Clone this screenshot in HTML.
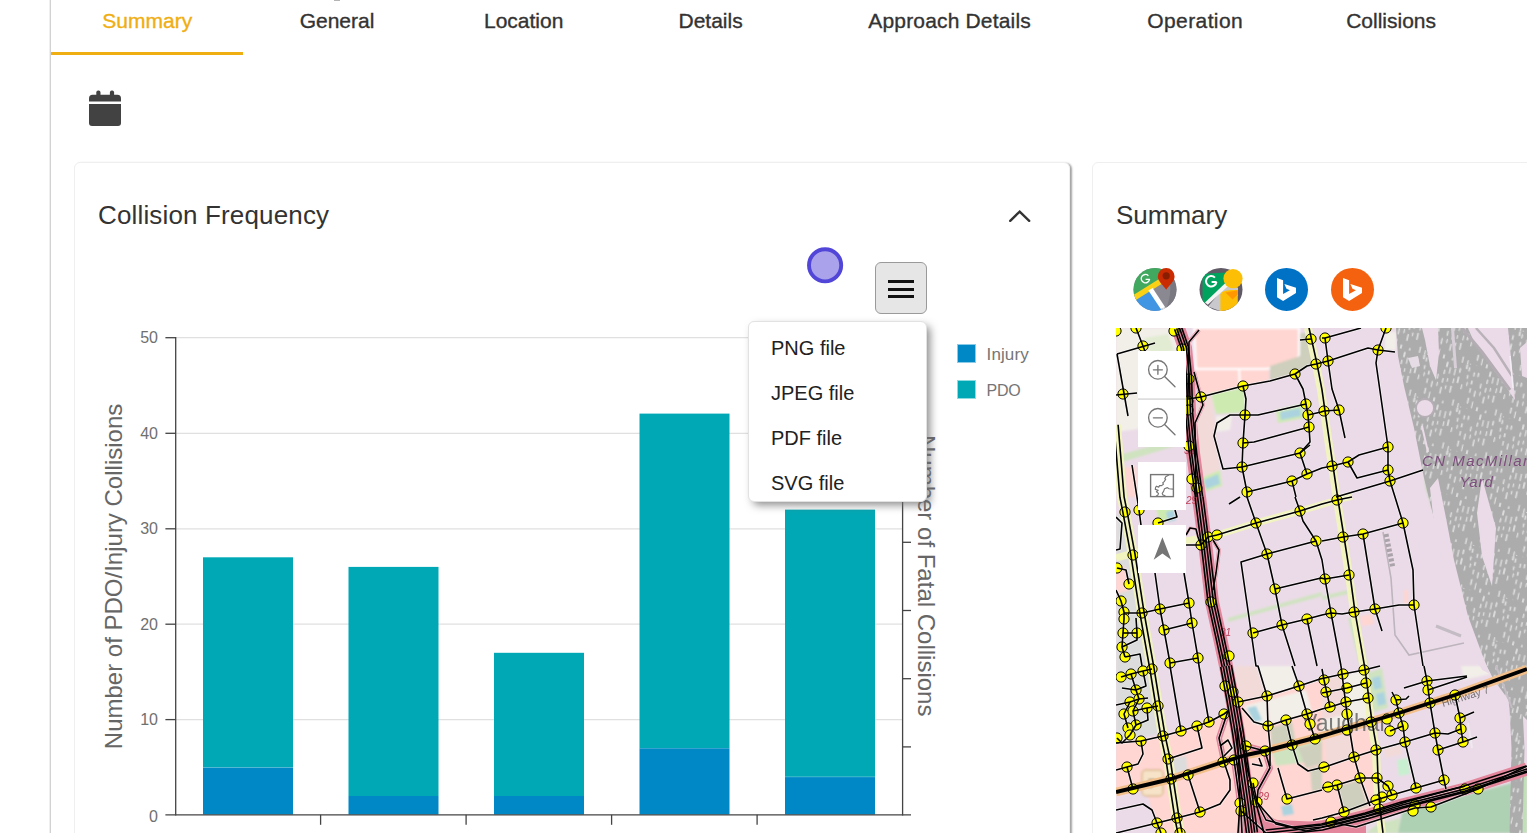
<!DOCTYPE html>
<html>
<head>
<meta charset="utf-8">
<title>Summary</title>
<style>
html,body{margin:0;padding:0;background:#fff;}
body{width:1527px;height:833px;overflow:hidden;position:relative;font-family:"Liberation Sans",sans-serif;color:#333;}
.abs{position:absolute;}
.tab{position:absolute;top:8px;height:26px;line-height:26px;font-size:21px;color:#333;white-space:nowrap;transform:translateX(-50%);-webkit-text-stroke:0.35px #333;}
.tab.active{color:#efae12;-webkit-text-stroke:0.35px #efae12;}
.card{position:absolute;background:#fff;border:1px solid #efefef;border-radius:6px;box-sizing:border-box;}
.title{position:absolute;font-size:26px;line-height:30px;color:#333;white-space:nowrap;}
.mi{position:absolute;left:22px;font-size:20px;line-height:24px;color:#212121;white-space:nowrap;}
</style>
</head>
<body>
<!-- left container border -->
<div class="abs" style="left:49px;top:0;width:1px;height:833px;background:#efefef;"></div><div class="abs" style="left:50px;top:0;width:1px;height:833px;background:#d2d2d2;"></div>
<div class="abs" style="left:334px;top:0;width:6px;height:1px;background:#b4b4b4;"></div>

<!-- tabs -->
<div class="tab active" style="left:147.3px;">Summary</div>
<div class="tab" style="left:337px;">General</div>
<div class="tab" style="left:523.7px;">Location</div>
<div class="tab" style="left:710.6px;">Details</div>
<div class="tab" style="left:949.6px;letter-spacing:0.17px;">Approach Details</div>
<div class="tab" style="left:1195.2px;letter-spacing:0.4px;">Operation</div>
<div class="tab" style="left:1391.1px;">Collisions</div>
<div class="abs" style="left:51px;top:52px;width:192px;height:3px;background:#efae12;"></div>

<!-- calendar icon -->
<svg class="abs" style="left:89px;top:90px;" width="33" height="37" viewBox="0 0 33 37">
  <rect x="7.3" y="0.6" width="4.2" height="7" rx="1.8" fill="#424242"/>
  <rect x="20.9" y="0.6" width="4.2" height="7" rx="1.8" fill="#424242"/>
  <path d="M0 8.4 Q0 4.8 3.6 4.8 H28.4 Q32 4.8 32 8.4 V11.6 H0 Z" fill="#424242"/>
  <path d="M0 14 H32 V33 Q32 36 29 36 H3 Q0 36 0 33 Z" fill="#424242"/>
</svg>

<!-- CARD 1 -->
<div class="card" id="card1" style="left:74px;top:162px;width:996px;height:700px;box-shadow:2px 1px 2px rgba(0,0,0,0.36);"></div>
<div class="title" style="left:98px;top:200px;letter-spacing:0.15px;">Collision Frequency</div>
<svg class="abs" style="left:1005px;top:205px;" width="30" height="24" viewBox="0 0 30 24">
  <path d="M5.2 15.8 L14.7 6.6 L24.2 15.8" fill="none" stroke="#333" stroke-width="2.4" stroke-linecap="round" stroke-linejoin="miter"/>
</svg>

<!-- CHART -->
<svg id="chart" class="abs" style="left:74px;top:230px;" width="996" height="603" viewBox="74 230 996 603" font-family="Liberation Sans, sans-serif">
  <!-- gridlines -->
  <g stroke="#e0e0e0" stroke-width="1.2">
    <line x1="176" y1="337.7" x2="903" y2="337.7"/>
    <line x1="176" y1="433.3" x2="903" y2="433.3"/>
    <line x1="176" y1="528.8" x2="903" y2="528.8"/>
    <line x1="176" y1="624.2" x2="903" y2="624.2"/>
    <line x1="176" y1="719.6" x2="903" y2="719.6"/>
  </g>
  <!-- bars PDO -->
  <g fill="#00a8b5">
    <rect x="203" y="557.3" width="90" height="210.1"/>
    <rect x="348.5" y="566.9" width="90" height="229.1"/>
    <rect x="494" y="652.8" width="90" height="143.2"/>
    <rect x="639.5" y="413.6" width="90" height="334.7"/>
    <rect x="785" y="509.6" width="90" height="267.3"/>
  </g>
  <!-- bars Injury -->
  <g fill="#0087c6">
    <rect x="203" y="767.4" width="90" height="47.2"/>
    <rect x="348.5" y="796" width="90" height="18.6"/>
    <rect x="494" y="796" width="90" height="18.6"/>
    <rect x="639.5" y="748.3" width="90" height="66.3"/>
    <rect x="785" y="776.9" width="90" height="37.7"/>
  </g>
  <!-- separator light lines -->
  <g stroke="#7fd3da" stroke-width="0.6" opacity="0.7">
    <line x1="203" y1="767.4" x2="293" y2="767.4"/>
    <line x1="785" y1="776.9" x2="875" y2="776.9"/>
  </g>
  <!-- axes -->
  <g stroke="#444" stroke-width="1.3" fill="none">
    <line x1="175.7" y1="337" x2="175.7" y2="815.4"/>
    <line x1="165.4" y1="814.8" x2="911" y2="814.8"/>
    <line x1="165.4" y1="337.7" x2="176" y2="337.7"/>
    <line x1="165.4" y1="433.3" x2="176" y2="433.3"/>
    <line x1="165.4" y1="528.8" x2="176" y2="528.8"/>
    <line x1="165.4" y1="624.2" x2="176" y2="624.2"/>
    <line x1="165.4" y1="719.6" x2="176" y2="719.6"/>
    <line x1="320.6" y1="814.8" x2="320.6" y2="824.8"/>
    <line x1="466.1" y1="814.8" x2="466.1" y2="824.8"/>
    <line x1="611.6" y1="814.8" x2="611.6" y2="824.8"/>
    <line x1="757.1" y1="814.8" x2="757.1" y2="824.8"/>
    <line x1="902.6" y1="337" x2="902.6" y2="815.4"/>
    <line x1="902.6" y1="337.7" x2="911" y2="337.7"/>
    <line x1="902.6" y1="405.9" x2="911" y2="405.9"/>
    <line x1="902.6" y1="474.1" x2="911" y2="474.1"/>
    <line x1="902.6" y1="542.3" x2="911" y2="542.3"/>
    <line x1="902.6" y1="610.5" x2="911" y2="610.5"/>
    <line x1="902.6" y1="678.7" x2="911" y2="678.7"/>
    <line x1="902.6" y1="746.9" x2="911" y2="746.9"/>
  </g>
  <!-- y labels -->
  <g font-size="16" fill="#707070" text-anchor="end">
    <text x="158" y="343.3">50</text>
    <text x="158" y="438.9">40</text>
    <text x="158" y="534.4">30</text>
    <text x="158" y="629.8">20</text>
    <text x="158" y="725.2">10</text>
    <text x="158" y="821.6">0</text>
  </g>
  <!-- axis titles -->
  <text transform="translate(122.2,749.2) rotate(-90)" font-size="24" fill="#666" letter-spacing="0">Number of PDO/Injury Collisions</text>
  <text transform="translate(918.3,435) rotate(90)" font-size="24" fill="#666">Number of Fatal Collisions</text>
  <!-- legend -->
  <rect x="957.5" y="344.5" width="18" height="18" fill="#0087c6" stroke="#8ccbe8" stroke-width="1"/>
  <rect x="957.5" y="380.5" width="18" height="18" fill="#00a8b5" stroke="#8cdbe0" stroke-width="1"/>
  <text x="986.6" y="359.8" font-size="17" fill="#757575" letter-spacing="0.1">Injury</text>
  <text x="986.6" y="395.8" font-size="16" fill="#757575" letter-spacing="-0.3">PDO</text>
  <!-- purple circle -->
  <circle cx="825.1" cy="265.3" r="16.1" fill="#aaa2ea" stroke="#5146d8" stroke-width="3.9"/>
</svg>

<!-- hamburger button -->
<div class="abs" style="left:875px;top:262px;width:52px;height:52px;box-sizing:border-box;background:#e6e6e6;border:1px solid #9a9a9a;border-radius:6px;"></div>
<div class="abs" style="left:888px;top:280px;width:26px;height:3px;background:#111;"></div>
<div class="abs" style="left:888px;top:287.6px;width:26px;height:3px;background:#111;"></div>
<div class="abs" style="left:888px;top:295px;width:26px;height:3px;background:#111;"></div>

<!-- dropdown menu -->
<div class="abs" style="left:748px;top:321px;width:179px;height:181px;box-sizing:border-box;background:#fff;border:1px solid #e2e2e2;border-radius:6px;box-shadow:4px 4px 9px -1px rgba(110,110,110,0.8);">
  <div class="mi" style="top:13.5px;">PNG file</div>
  <div class="mi" style="top:58.5px;">JPEG file</div>
  <div class="mi" style="top:103.5px;">PDF file</div>
  <div class="mi" style="top:148.5px;">SVG file</div>
</div>

<!-- CARD 2 -->
<div class="card" id="card2" style="left:1092px;top:162px;width:500px;height:700px;"></div>
<div class="title" style="left:1116px;top:200px;">Summary</div>

<!-- Google Maps icon -->
<svg class="abs" style="left:1131px;top:266px;" width="48" height="48" viewBox="-24 -23.4 48 48">
  <defs><clipPath id="gc1"><circle cx="0" cy="0" r="21.5"/></clipPath></defs>
  <g clip-path="url(#gc1)">
    <rect x="-24" y="-24" width="48" height="48" fill="#8a8992"/>
    <path d="M14 -12 Q18 4 10 22 L24 22 L24 -12 Z" fill="#7a7981"/>
    <polygon points="-24,-24 8,-24 8,-12 -21,7 -24,7" fill="#41a85f"/>
    <polygon points="-24,10 -18,5 -3,-1 7.5,18 5,24 -24,24" fill="#4096e2"/>
    <polygon points="-22,5.8 4.5,-10.6 6.5,-5.4 -19.5,10.8" fill="#fbd116"/>
    <polygon points="-6.6,1.2 -2.4,-1.5 10.2,17.8 5.8,19.6" fill="#ffffff"/>
    <polygon points="5.8,19.6 10.2,17.8 10.8,19 6.6,21" fill="#e8e8e8"/>
  </g>
  <path d="M11.2 -21.4 a8.4 8.4 0 0 1 8.4 8.4 c0 5 -5.4 8.4 -8.4 13.4 c-3 -5 -8.4 -8.4 -8.4 -13.4 a8.4 8.4 0 0 1 8.4 -8.4 z" fill="#cb2b00"/>
  <circle cx="11.2" cy="-13.6" r="3.6" fill="#881d00"/>
  <path d="M-5.4 -10.4 a4.2 4.2 0 1 1 -1.2 -3.3 M-5.2 -10 h-4.2" fill="none" stroke="#fff" stroke-width="1.35"/>
</svg>
<!-- Google Street View icon -->
<svg class="abs" style="left:1197px;top:266px;" width="48" height="48" viewBox="-24 -23.4 48 48">
  <defs><clipPath id="gc2"><circle cx="0" cy="0" r="21.5"/></clipPath></defs>
  <g clip-path="url(#gc2)">
    <rect x="-24" y="-24" width="48" height="48" fill="#5f5a66"/>
    <polygon points="5,-4 17,-2 17,6 0,22 -13,17" fill="#c9c9cd"/>
    <path d="M-16.8 -15 L6 -16.2 V-5 L-15.4 13.4 L-17.8 11.4 V-13.8 Z" fill="#00a35e" stroke="#00a35e" stroke-width="1.4" stroke-linejoin="round"/>
    <polygon points="4.4,-6.4 7.2,-3.4 -13.2,15.4 -16,13" fill="#f4f4f4"/>
    <path d="M-0.6 24 V5 Q1 1 10 0.6 H16.8 V24 Z" fill="#fcbf05"/>
    <polygon points="4.4,3.2 16.8,0.8 16.8,5 11.6,10" fill="#ff9800"/>
  </g>
  <circle cx="12" cy="-10.8" r="9.6" fill="#fcbf05"/>
  <path d="M-4.6 -7.6 a5.2 5.2 0 1 1 -1.5 -4.2 M-4.4 -7.4 h-5" fill="none" stroke="#fff" stroke-width="2"/>
</svg>
<!-- Bing blue -->
<svg class="abs" style="left:1263px;top:266px;" width="48" height="48" viewBox="-24 -23.4 48 48">
  <circle cx="-0.5" cy="0" r="21.5" fill="#0072c6"/>
  <polygon points="-10,-11.3 -3.9,-9.1 -3.9,4.5 2.9,0.85 -0.5,-0.6 -2.6,-5.3 9,-1.7 9,3.7 -3.9,11.7 -10,7.8" fill="#fff"/>
</svg>
<!-- Bing orange -->
<svg class="abs" style="left:1329px;top:266px;" width="48" height="48" viewBox="-24 -23.4 48 48">
  <circle cx="-0.5" cy="0" r="21.5" fill="#f5620f"/>
  <polygon points="-10,-11.3 -3.9,-9.1 -3.9,4.5 2.9,0.85 -0.5,-0.6 -2.6,-5.3 9,-1.7 9,3.7 -3.9,11.7 -10,7.8" fill="#fff"/>
</svg>


<svg class="abs" style="left:1116px;top:328px;" width="411" height="505" viewBox="0 0 411 505" font-family="Liberation Sans, sans-serif">
<defs>
<pattern id="hatch" width="44" height="44" patternUnits="userSpaceOnUse" patternTransform="rotate(13)"><rect width="44" height="44" fill="#acacac"/><rect x="0.7" y="2.6" width="1.7" height="4.5" rx="0.8" fill="#dcdcdc"/><rect x="0.7" y="10.5" width="1.6" height="4.2" rx="0.8" fill="#dcdcdc"/><rect x="1.9" y="17.4" width="1.4" height="4.3" rx="0.8" fill="#dcdcdc"/><rect x="0.8" y="42.9" width="1.4" height="7.0" rx="0.8" fill="#dcdcdc"/><rect x="6.6" y="6.5" width="1.6" height="4.6" rx="0.8" fill="#dcdcdc"/><rect x="5.9" y="15.0" width="1.8" height="4.2" rx="0.8" fill="#dcdcdc"/><rect x="6.3" y="22.8" width="1.5" height="5.1" rx="0.8" fill="#dcdcdc"/><rect x="6.5" y="32.4" width="1.7" height="6.4" rx="0.8" fill="#dcdcdc"/><rect x="7.2" y="43.5" width="1.4" height="6.6" rx="0.8" fill="#dcdcdc"/><rect x="10.7" y="6.1" width="1.8" height="4.5" rx="0.8" fill="#dcdcdc"/><rect x="11.5" y="24.3" width="1.6" height="6.4" rx="0.8" fill="#dcdcdc"/><rect x="11.7" y="35.3" width="1.3" height="7.3" rx="0.8" fill="#dcdcdc"/><rect x="15.6" y="15.9" width="1.6" height="5.4" rx="0.8" fill="#dcdcdc"/><rect x="16.8" y="24.1" width="1.4" height="4.4" rx="0.8" fill="#dcdcdc"/><rect x="17.0" y="39.7" width="1.9" height="5.6" rx="0.8" fill="#dcdcdc"/><rect x="22.0" y="2.2" width="2.0" height="5.5" rx="0.8" fill="#dcdcdc"/><rect x="21.0" y="10.6" width="1.6" height="4.6" rx="0.8" fill="#dcdcdc"/><rect x="21.3" y="19.1" width="1.6" height="4.9" rx="0.8" fill="#dcdcdc"/><rect x="21.4" y="28.0" width="1.7" height="7.3" rx="0.8" fill="#dcdcdc"/><rect x="26.2" y="7.0" width="1.4" height="6.8" rx="0.8" fill="#dcdcdc"/><rect x="25.9" y="17.9" width="1.4" height="4.2" rx="0.8" fill="#dcdcdc"/><rect x="25.8" y="25.4" width="1.4" height="4.2" rx="0.8" fill="#dcdcdc"/><rect x="26.2" y="41.2" width="1.6" height="4.5" rx="0.8" fill="#dcdcdc"/><rect x="31.4" y="6.8" width="1.4" height="7.5" rx="0.8" fill="#dcdcdc"/><rect x="31.9" y="17.0" width="1.4" height="5.2" rx="0.8" fill="#dcdcdc"/><rect x="30.8" y="24.8" width="1.7" height="7.3" rx="0.8" fill="#dcdcdc"/><rect x="35.9" y="5.6" width="1.8" height="4.9" rx="0.8" fill="#dcdcdc"/><rect x="36.0" y="14.3" width="1.9" height="6.7" rx="0.8" fill="#dcdcdc"/><rect x="36.4" y="37.5" width="1.5" height="6.6" rx="0.8" fill="#dcdcdc"/><rect x="41.7" y="0.2" width="2.0" height="5.0" rx="0.8" fill="#dcdcdc"/><rect x="41.0" y="21.0" width="1.4" height="5.3" rx="0.8" fill="#dcdcdc"/><rect x="41.9" y="40.1" width="1.4" height="5.7" rx="0.8" fill="#dcdcdc"/></pattern>
<filter id="bl" x="-5%" y="-5%" width="110%" height="110%"><feGaussianBlur stdDeviation="0.9"/></filter>
<filter id="bl2" x="-5%" y="-5%" width="110%" height="110%"><feGaussianBlur stdDeviation="0.6"/></filter>
<clipPath id="mc"><rect width="411" height="505"/></clipPath>
</defs>
<g clip-path="url(#mc)">
<rect width="411" height="505" fill="#ebdbe8"/>
<g filter="url(#bl)">
<polygon points="0,0 62,0 69,25 71,60 72,92 30,100 0,104" fill="#f2efe9" />
<polygon points="28,10 52,6 58,22 36,30" fill="#e2ecd2" />
<polygon points="0,128 70,108 72,114 0,136" fill="#cfe3c0" />
<polygon points="8,140 20,138 24,169 12,169" fill="#ffd6d1" />
<path d="M78 0 H183 V26 Q182 36 170 37 L150 41 H80 Z" fill="#ffd6d1" stroke="#fff" stroke-width="2"/>
<polygon points="80,42 153,42 153,52 127,58 85,68 82,60" fill="#ffd6d1" />
<path d="M80 41 H150 M123 41 L124 58" stroke="#fff" stroke-width="2" fill="none"/>
<polygon points="154,38 184,28 184,5 194,5 198,34 179,46 154,53" fill="#cfcfbd" />
<polygon points="80,70 96,68 100,100 104,142 84,160 80,130" fill="#f2dad9" />
<polygon points="95,65 128,60 130,84 100,86" fill="#cdebb0" />
<polygon points="100,88 116,88 114,102 100,104" fill="#f2efe9" />
<polygon points="160,82 186,76 188,90 162,95" fill="#cdebb0" />
<polygon points="164,84 184,80 185,88 165,92" fill="#aad3df" />
<polygon points="85,150 104,142 106,158 88,164" fill="#cdebb0" />
<polygon points="88,152 102,146 104,156 90,161" fill="#aad3df" />
<polygon points="0,186 8,186 16,227 26,285 36,338 0,338" fill="#dddcdc" />
<polygon points="0,338 36,338 42,378 46,405 0,415" fill="#dddcdc" />
<polygon points="40,180 56,178 58,190 44,196" fill="#cdebb0" />
<polygon points="50,184 58,182 60,192 52,194" fill="#aad3df" />
<polygon points="0,240 8,238 14,262 0,266" fill="#ffd6d1" />
<polygon points="112,290 206,264 206,268 112,294" fill="#cfe3c0" />
<polygon points="0,415 47,408 93,394 108,386 112,383 125,505 0,505" fill="#ffd6d1" />
<polygon points="0,468 30,462 36,482 45,505 0,505" fill="#ebdbe8" />
<polygon points="56,430 70,428 72,446 58,450" fill="#dddcdc" />
<rect x="26" y="442" width="21" height="26" rx="4" fill="#f6e3c8" stroke="#dcb98c" stroke-width="1.4"/>
<text x="32" y="460" font-size="13" fill="#7a6a52" font-weight="bold">7</text>
<polygon points="118,338 140,338 151,368 122,376" fill="#f2dad9" />
<polygon points="142,338 176,338 183,358 151,368" fill="#f2efe9" />
<polygon points="122,376 206,352 206,505 150,505 135,480 128,430" fill="#ffd6d1" />
<polygon points="128,378 150,372 152,398 138,396" fill="#f2efe9" />
<polygon points="131,380 140,378 146,392 138,394" fill="#aad3df" />
<polygon points="154,400 176,394 180,416 156,420" fill="#cfcfbd" />
<polygon points="152,372 190,362 196,384 154,396" fill="#f2efe9" />
<polygon points="156,424 206,410 206,432 160,438" fill="#cfe3c0" />
<polygon points="182,420 206,414 206,436 190,440" fill="#cfcfbd" />
<polygon points="194,440 206,438 206,462 196,464" fill="#cfcfbd" />
<polygon points="165,478 176,476 178,486 167,488" fill="#aad3df" />
<polygon points="206,352 250,342 256,394 206,408" fill="#f2efe9" />
<polygon points="206,352 226,347 232,386 206,392" fill="#f2dad9" />
<polygon points="206,412 260,398 262,450 264,482 206,498" fill="#ffd6d1" />
<polygon points="222,458 243,452 252,478 228,486" fill="#cfcfbd" />
<polygon points="209,412 232,406 238,430 210,438" fill="#f2dad9" />
<polygon points="252,345 266,340 272,380 258,384" fill="#cfe3c0" />
<polygon points="256,350 264,348 266,360 258,362" fill="#aad3df" />
<polygon points="260,366 268,364 270,376 262,378" fill="#aad3df" />
<polygon points="268,420 284,416 286,426 270,430" fill="#f2dad9" />
<polygon points="281,432 292,430 294,446 283,448" fill="#c8f0d0" />
<polygon points="282,505 286,484 346,468 411,451 411,505" fill="#aed1b3" />
<polygon points="250,505 262,496 284,490 282,505" fill="#cfe3c0" />
<polygon points="398,440 411,438 411,505 400,505" fill="#c0e0b8" />
<polygon points="269,4 280,4 280,22 269,22" fill="#f2efe9" />
<polygon points="307,7 313,7 313,14 307,14" fill="#aad3df" />
<polygon points="308,142 316,142 322,169 328,181 316,180 310,160" fill="#b5d8a4" />
<polygon points="325,189 336,188 342,234 338,220" fill="#aad3df" />
<polygon points="345,338 372,338 374,346 348,352" fill="#f2efe9" />
<polygon points="288,262 292,262 292,276 288,276" fill="#ffd6d1" />
<polygon points="244,288 256,286 258,296 246,298" fill="#ffd6d1" />
<polygon points="206,268 232,262 232,266 206,272" fill="#cfe3c0" />
<polygon points="232,290 240,290 252,338 262,380 256,380 244,338" fill="#cfe3c0" />
</g>
<g filter="url(#bl2)">
<polygon points="280,0 411,0 411,392 397,378 378,352 360,318 344,282 330,238 319,195 308,150 298,100 288,58 282,28" fill="url(#hatch)"/>
<polygon points="306,0 322,0 323,25 320,52 314,38 309,12" fill="#ebdbe8" />
<polygon points="335,0 338,0 341,40 338,40" fill="#d8cfd8" />
<polygon points="352,0 392,0 396,40 399,72 388,56 372,34 358,14" fill="#ebdbe8" />
<path d="M346 0 L366 24 L394 62" stroke="#b3adb3" stroke-width="3" fill="none"/>
<path d="M360 0 L378 20 L396 48" stroke="#b9b2b9" stroke-width="2.5" fill="none"/>
<path d="M394 28 L397 60" stroke="#f3eef3" stroke-width="1.5" fill="none"/>
<polygon points="404,20 411,14 411,50 406,48" fill="#ebdbe8" />
<polygon points="292,30 302,28 304,38 296,40" fill="#e6dce6" />
<polygon points="366,150 380,200 376,258 366,228 361,185" fill="#ebdbe8" />
<polygon points="322,150 330,190 338,232 352,288 366,326 374,346 366,342 354,318 342,292 328,246 318,196 314,160" fill="#ebdbe8" />
<polygon points="296,96 306,140 312,150 322,150 318,120 316,100 308,96" fill="#b1abb1" opacity="0.0"/>
<circle cx="309" cy="80" r="9" fill="#ebdbe8" stroke="#b5aeb5" stroke-width="1.8"/>
<path d="M306 98 L312 124" stroke="#ebdbe8" stroke-width="2" stroke-dasharray="1 0" fill="none"/>
<path d="M393 330 L400 380 L402 420 L400 505" stroke="url(#hatch)" stroke-width="13" fill="none"/>
<path d="M267 204 L275 250 L279 307 L293 327 L348 315" stroke="#bdb5bd" stroke-width="1.6" fill="none"/>
<path d="M270 206 L277 240" stroke="#aaa3aa" stroke-width="5" stroke-dasharray="3 2" fill="none"/>
<path d="M380 338 L396 380" stroke="#c4bcc4" stroke-width="2" fill="none"/>
<path d="M320 298 L345 308" stroke="#c4bcc4" stroke-width="3" fill="none"/>
<path d="M352 395 L356 420" stroke="#f0eaf0" stroke-width="2" fill="none"/>
</g>
<g filter="url(#bl2)" fill="none" stroke-linejoin="round">
<path d="M0 97 L6 169 L9 184 L17 227 L26 285 L36 341 L42 378 L47 408 L52 431 L55 451 L61 490 L64 505" stroke="#f2f4bf" stroke-width="10"/>
<path d="M192 0 L200 36 L205 62 L208 83 L216 138 L221 172 L227 209 L233 247 L238 284 L248 341 L255 394 L260 422 L261 450 L263 481 L266 505" stroke="#f2f4bf" stroke-width="8"/>
<path d="M0 230 L22 224 L70 213 L101 207 L140 195 L184 183 L221 172 L236 168" stroke="#f2f4bf" stroke-width="7"/>
<path d="M0 464 L55 451 L107 434 L130 427 L149 423 L206 408 L283 385 L339 367 L411 341" stroke="#f3c08c" stroke-width="8.5"/>
<path d="M62 0 L69 20 L72 50 L73 85 L77 125 L83 169 L89 215 L96 274 L104 310 L110 338 L116 370 L122 405 L127 440 L132 475 L136 505" stroke="#e3859b" stroke-width="14"/>
<path d="M150 505 L206 499 L250 488 L286 477 L349 461 L411 441" stroke="#e3859b" stroke-width="13"/>
<path d="M112 383 L103 410 L108 434 L118 432 L124 475 L126 505" stroke="#e3859b" stroke-width="6"/>
<path d="M130 418 L149 423 L154 440 L142 462 L141 474 L150 492 L180 500 L206 497" stroke="#e3859b" stroke-width="6"/>
<path d="M78 44 L87 77 L79 95" stroke="#e3859b" stroke-width="4"/>
<path d="M83 2 L73 14" stroke="#e3859b" stroke-width="4"/>
<path d="M70 207 L74 200 L80 201 L82 209" stroke="#e3859b" stroke-width="3"/>
<path d="M97 212 L103 222 L100 245 L97 262" stroke="#e3859b" stroke-width="4"/>
<polygon points="126,505 140,478 160,492 206,494 250,484 250,505" fill="#e3859b" stroke="none"/>
</g>
<g filter="url(#bl2)">
<text x="306" y="138" font-size="15" font-style="italic" fill="#7d4f7d" letter-spacing="1.45">CN MacMillan</text>
<text x="343.5" y="159" font-size="15" font-style="italic" fill="#7d4f7d" letter-spacing="0.9">Yard</text>
<text x="186" y="403" font-size="23" fill="#555" opacity="0.75">Vaughan</text>
<text transform="translate(327,379) rotate(-17)" font-size="10.5" fill="#555" opacity="0.8">Highway 7</text>
<g font-size="10" fill="#c0405a" font-style="italic"><text x="68" y="126">32</text><text x="70" y="176">29</text><text x="104" y="308">31</text><text x="142" y="472">29</text></g>
</g>
<g fill="none" stroke="#ffffff" stroke-width="3.2" opacity="0.55" stroke-linejoin="round" filter="url(#bl2)">
<path d="M1 26 L39 15"/>
<path d="M1 26 L12 88"/>
<path d="M20 0 L27 18 L30 26"/>
<path d="M0 67 L21 65"/>
<path d="M72 71 L85 69 L127 58 L154 53 L179 46 L191 38 L200 36 L212 33 L252 20 L262 22 L279 24"/>
<path d="M127 58 L130 71 L129 87 L127 115 L126 139 L131 164 L131 169 L140 195 L151 226 L159 261 L166 297 L179 338"/>
<path d="M179 46 L187 61 L190 76 L192 87 L193 99 L194 114 L184 125 L191 146"/>
<path d="M129 87 L114 87 L101 95 L98 108 L107 141 L126 139"/>
<path d="M129 87 L142 87 L190 76"/>
<path d="M127 115 L138 114 L193 99"/>
<path d="M126 139 L184 125 L194 117"/>
<path d="M131 164 L176 153 L191 146 L206 140 L216 138 L232 134 L243 127 L272 119"/>
<path d="M176 153 L180 169"/>
<path d="M184 12 L195 11"/>
<path d="M192 87 L205 84 L208 83 L223 82"/>
<path d="M206 10 L209 10 L245 0"/>
<path d="M270 0 L262 22 L260 35 L272 119 L272 142 L274 153 L279 169 L287 195 L297 242 L298 277 L307 338"/>
<path d="M209 10 L212 33 L216 61 L223 82 L229 110"/>
<path d="M232 134 L241 150 L272 142"/>
<path d="M220 169 L274 153 L307 142"/>
<path d="M83 2 L73 14 L72 70"/>
<path d="M78 44 L87 77 L79 95 L80 169"/>
<path d="M16 137 L23 182 L25 197"/>
<path d="M42 195 L61 189 L59 182"/>
<path d="M8 285 L26 285 L44 281 L73 275"/>
<path d="M48 302 L76 295"/>
<path d="M54 335 L82 330"/>
<path d="M39 245 L44 281 L48 302 L54 335 L54 338 L65 403"/>
<path d="M68 245 L73 275 L76 295 L82 330 L83 338 L93 394"/>
<path d="M113 176 L124 169"/>
<path d="M101 207 L140 195 L184 183 L206 176 L221 172 L236 169"/>
<path d="M179 169 L184 183 L187 193 L200 213 L206 232 L209 251 L215 285 L225 338"/>
<path d="M151 226 L200 213"/>
<path d="M151 226 L125 234 L140 338 L142 338 L151 368 L152 398 L154 418 L154 438"/>
<path d="M159 261 L205 250 L209 251 L233 247"/>
<path d="M137 305 L166 297 L191 291 L206 287 L215 285 L226 286 L238 284 L259 281 L283 277 L298 277"/>
<path d="M191 291 L201 338"/>
<path d="M206 213 L227 209 L247 206 L287 195"/>
<path d="M247 206 L259 281 L266 303"/>
<path d="M0 189 L6 195 L4 221 L0 222"/>
<path d="M1 240 L10 242 L13 256"/>
<path d="M0 262 L5 273 L8 284 L8 291 L7 305 L6 319 L9 329"/>
<path d="M7 305 L21 305"/>
<path d="M20 290 L21 305 L21 312 L6 319"/>
<path d="M9 329 L24 326 L26 338"/>
<path d="M5 349 L15 346 L27 343 L36 341"/>
<path d="M15 346 L20 362 L23 371 L17 383 L20 397 L14 407"/>
<path d="M6 360 L20 362 L30 358 L27 343"/>
<path d="M0 377 L14 374 L23 371 L32 370"/>
<path d="M14 374 L8 386 L12 400"/>
<path d="M17 383 L31 380 L42 378"/>
<path d="M31 380 L32 392 L20 397"/>
<path d="M1 410 L6 415 L14 407"/>
<path d="M0 415 L25 413 L47 408 L65 403 L81 398 L93 394 L108 386 L112 383"/>
<path d="M81 398 L86 420 L52 431"/>
<path d="M25 413 L27 426 L22 436 L11 439 L0 442"/>
<path d="M11 439 L17 461"/>
<path d="M72 447 L84 484"/>
<path d="M41 495 L61 490 L84 484 L104 476 L114 462 L114 452 L108 434"/>
<path d="M0 482 L27 476 L36 482 L41 495 L45 505"/>
<path d="M0 505 L41 495"/>
<path d="M122 374 L151 368 L183 358 L204 351 L227 346 L248 342 L264 338"/>
<path d="M176 338 L183 358 L191 386 L194 396 L199 411"/>
<path d="M126 380 L138 394 L152 398 L170 392 L191 386 L206 381 L214 379 L230 374 L252 370"/>
<path d="M170 392 L176 417 L182 436 L192 443 L204 440 L206 440 L238 429 L260 422 L289 414 L319 405 L332 406 L345 401"/>
<path d="M162 440 L171 471 L206 462"/>
<path d="M197 492 L206 490 L228 484 L260 472 L276 467 L300 460 L328 452"/>
<path d="M225 338 L231 386 L238 429 L244 450 L254 478"/>
<path d="M206 365 L231 360 L250 355"/>
<path d="M206 341 L208 352 L214 379"/>
<path d="M276 364 L280 372 L283 385 L287 398 L289 414 L300 460"/>
<path d="M280 372 L290 371 L293 368"/>
<path d="M288 360 L311 353 L351 348"/>
<path d="M312 362 L351 349"/>
<path d="M308 338 L311 353 L314 375 L319 405 L322 422 L328 452 L330 461"/>
<path d="M339 367 L344 390 L345 401 L347 414"/>
<path d="M344 390 L358 384"/>
<path d="M322 422 L347 414 L361 409"/>
<path d="M206 460 L212 459 L221 457 L244 450 L261 450 L272 458 L276 467"/>
<path d="M221 457 L228 484"/>
<path d="M274 403 L287 398"/>
<path d="M112 383 L103 410 L108 434 L118 432"/>
<path d="M104 418 L112 412 L116 420 L108 428"/>
<path d="M130 418 L149 423 L154 440 L142 462 L141 474 L146 480"/>
<path d="M136 436 L146 438 L143 430"/>
<path d="M118 432 L124 475 L125 483 L126 505"/>
<path d="M137 455 L141 474 L150 492 L180 500 L206 497 L250 486 L297 472 L349 458"/>
<path d="M125 483 L150 505"/>
<path d="M146 480 L160 496 L190 503 L230 494 L286 479 L349 463 L411 443"/>
<path d="M215 494 L240 499 L299 480 L315 479 L362 461 L411 438"/>
<path d="M70 207 L74 200 L80 201 L82 209 L85 217"/>
<path d="M70 217 L85 217 L92 209 L101 207"/>
<path d="M97 212 L103 222 L100 245 L97 262"/>
</g>
<g fill="#ffff00" stroke="#000" stroke-width="1">
<circle cx="0" cy="3" r="5.1"/>
<circle cx="20" cy="0" r="5.1"/>
<circle cx="27" cy="18" r="5.1"/>
<circle cx="7" cy="66" r="5.1"/>
<circle cx="58" cy="3" r="5.1"/>
<circle cx="66" cy="21" r="5.1"/>
<circle cx="73" cy="51" r="5.1"/>
<circle cx="72" cy="73" r="5.1"/>
<circle cx="72" cy="82" r="5.1"/>
<circle cx="73" cy="118" r="5.1"/>
<circle cx="76" cy="151" r="5.1"/>
<circle cx="81" cy="160" r="5.1"/>
<circle cx="85" cy="69" r="5.1"/>
<circle cx="127" cy="58" r="5.1"/>
<circle cx="179" cy="46" r="5.1"/>
<circle cx="200" cy="36" r="5.1"/>
<circle cx="129" cy="87" r="5.1"/>
<circle cx="127" cy="115" r="5.1"/>
<circle cx="126" cy="139" r="5.1"/>
<circle cx="131" cy="164" r="5.1"/>
<circle cx="190" cy="76" r="5.1"/>
<circle cx="192" cy="87" r="5.1"/>
<circle cx="193" cy="99" r="5.1"/>
<circle cx="184" cy="125" r="5.1"/>
<circle cx="191" cy="146" r="5.1"/>
<circle cx="176" cy="153" r="5.1"/>
<circle cx="195" cy="11" r="5.1"/>
<circle cx="209" cy="10" r="5.1"/>
<circle cx="212" cy="33" r="5.1"/>
<circle cx="262" cy="22" r="5.1"/>
<circle cx="270" cy="0" r="5.1"/>
<circle cx="223" cy="82" r="5.1"/>
<circle cx="208" cy="83" r="5.1"/>
<circle cx="272" cy="119" r="5.1"/>
<circle cx="232" cy="134" r="5.1"/>
<circle cx="216" cy="138" r="5.1"/>
<circle cx="272" cy="142" r="5.1"/>
<circle cx="274" cy="153" r="5.1"/>
<circle cx="9" cy="184" r="5.1"/>
<circle cx="23" cy="182" r="5.1"/>
<circle cx="42" cy="195" r="5.1"/>
<circle cx="17" cy="227" r="5.1"/>
<circle cx="1" cy="240" r="5.1"/>
<circle cx="13" cy="256" r="5.1"/>
<circle cx="5" cy="273" r="5.1"/>
<circle cx="8" cy="284" r="5.1"/>
<circle cx="26" cy="285" r="5.1"/>
<circle cx="44" cy="281" r="5.1"/>
<circle cx="73" cy="275" r="5.1"/>
<circle cx="8" cy="291" r="5.1"/>
<circle cx="7" cy="305" r="5.1"/>
<circle cx="21" cy="305" r="5.1"/>
<circle cx="48" cy="302" r="5.1"/>
<circle cx="76" cy="295" r="5.1"/>
<circle cx="6" cy="319" r="5.1"/>
<circle cx="9" cy="329" r="5.1"/>
<circle cx="54" cy="335" r="5.1"/>
<circle cx="82" cy="330" r="5.1"/>
<circle cx="95" cy="274" r="5.1"/>
<circle cx="113" cy="328" r="5.1"/>
<circle cx="85" cy="217" r="5.1"/>
<circle cx="92" cy="209" r="5.1"/>
<circle cx="101" cy="207" r="5.1"/>
<circle cx="140" cy="195" r="5.1"/>
<circle cx="184" cy="183" r="5.1"/>
<circle cx="200" cy="213" r="5.1"/>
<circle cx="151" cy="226" r="5.1"/>
<circle cx="159" cy="261" r="5.1"/>
<circle cx="137" cy="305" r="5.1"/>
<circle cx="166" cy="297" r="5.1"/>
<circle cx="191" cy="291" r="5.1"/>
<circle cx="221" cy="172" r="5.1"/>
<circle cx="227" cy="209" r="5.1"/>
<circle cx="247" cy="206" r="5.1"/>
<circle cx="287" cy="195" r="5.1"/>
<circle cx="233" cy="247" r="5.1"/>
<circle cx="209" cy="251" r="5.1"/>
<circle cx="215" cy="285" r="5.1"/>
<circle cx="238" cy="284" r="5.1"/>
<circle cx="259" cy="281" r="5.1"/>
<circle cx="298" cy="277" r="5.1"/>
<circle cx="5" cy="349" r="5.1"/>
<circle cx="15" cy="346" r="5.1"/>
<circle cx="27" cy="343" r="5.1"/>
<circle cx="36" cy="341" r="5.1"/>
<circle cx="20" cy="362" r="5.1"/>
<circle cx="14" cy="374" r="5.1"/>
<circle cx="23" cy="371" r="5.1"/>
<circle cx="31" cy="380" r="5.1"/>
<circle cx="42" cy="378" r="5.1"/>
<circle cx="8" cy="386" r="5.1"/>
<circle cx="17" cy="383" r="5.1"/>
<circle cx="20" cy="397" r="5.1"/>
<circle cx="12" cy="400" r="5.1"/>
<circle cx="14" cy="407" r="5.1"/>
<circle cx="1" cy="410" r="5.1"/>
<circle cx="25" cy="413" r="5.1"/>
<circle cx="47" cy="408" r="5.1"/>
<circle cx="65" cy="403" r="5.1"/>
<circle cx="81" cy="398" r="5.1"/>
<circle cx="93" cy="394" r="5.1"/>
<circle cx="108" cy="386" r="5.1"/>
<circle cx="109" cy="358" r="5.1"/>
<circle cx="117" cy="364" r="5.1"/>
<circle cx="122" cy="374" r="5.1"/>
<circle cx="52" cy="431" r="5.1"/>
<circle cx="11" cy="439" r="5.1"/>
<circle cx="55" cy="451" r="5.1"/>
<circle cx="72" cy="447" r="5.1"/>
<circle cx="17" cy="461" r="5.1"/>
<circle cx="107" cy="434" r="5.1"/>
<circle cx="118" cy="432" r="5.1"/>
<circle cx="130" cy="418" r="5.1"/>
<circle cx="149" cy="423" r="5.1"/>
<circle cx="151" cy="368" r="5.1"/>
<circle cx="183" cy="358" r="5.1"/>
<circle cx="152" cy="398" r="5.1"/>
<circle cx="170" cy="392" r="5.1"/>
<circle cx="191" cy="386" r="5.1"/>
<circle cx="194" cy="396" r="5.1"/>
<circle cx="176" cy="417" r="5.1"/>
<circle cx="199" cy="411" r="5.1"/>
<circle cx="137" cy="455" r="5.1"/>
<circle cx="124" cy="475" r="5.1"/>
<circle cx="141" cy="474" r="5.1"/>
<circle cx="125" cy="483" r="5.1"/>
<circle cx="171" cy="471" r="5.1"/>
<circle cx="84" cy="484" r="5.1"/>
<circle cx="61" cy="490" r="5.1"/>
<circle cx="41" cy="495" r="5.1"/>
<circle cx="64" cy="505" r="5.1"/>
<circle cx="45" cy="505" r="5.1"/>
<circle cx="208" cy="352" r="5.1"/>
<circle cx="227" cy="346" r="5.1"/>
<circle cx="248" cy="342" r="5.1"/>
<circle cx="210" cy="364" r="5.1"/>
<circle cx="231" cy="360" r="5.1"/>
<circle cx="250" cy="355" r="5.1"/>
<circle cx="214" cy="379" r="5.1"/>
<circle cx="230" cy="374" r="5.1"/>
<circle cx="252" cy="370" r="5.1"/>
<circle cx="231" cy="386" r="5.1"/>
<circle cx="255" cy="394" r="5.1"/>
<circle cx="231" cy="402" r="5.1"/>
<circle cx="271" cy="391" r="5.1"/>
<circle cx="283" cy="385" r="5.1"/>
<circle cx="280" cy="372" r="5.1"/>
<circle cx="274" cy="403" r="5.1"/>
<circle cx="287" cy="398" r="5.1"/>
<circle cx="311" cy="353" r="5.1"/>
<circle cx="312" cy="362" r="5.1"/>
<circle cx="314" cy="375" r="5.1"/>
<circle cx="339" cy="367" r="5.1"/>
<circle cx="344" cy="390" r="5.1"/>
<circle cx="345" cy="401" r="5.1"/>
<circle cx="319" cy="405" r="5.1"/>
<circle cx="347" cy="414" r="5.1"/>
<circle cx="322" cy="422" r="5.1"/>
<circle cx="289" cy="414" r="5.1"/>
<circle cx="260" cy="422" r="5.1"/>
<circle cx="238" cy="429" r="5.1"/>
<circle cx="208" cy="439" r="5.1"/>
<circle cx="244" cy="450" r="5.1"/>
<circle cx="261" cy="450" r="5.1"/>
<circle cx="221" cy="457" r="5.1"/>
<circle cx="212" cy="459" r="5.1"/>
<circle cx="272" cy="458" r="5.1"/>
<circle cx="276" cy="467" r="5.1"/>
<circle cx="266" cy="469" r="5.1"/>
<circle cx="260" cy="472" r="5.1"/>
<circle cx="263" cy="481" r="5.1"/>
<circle cx="228" cy="484" r="5.1"/>
<circle cx="215" cy="494" r="5.1"/>
<circle cx="300" cy="460" r="5.1"/>
<circle cx="328" cy="452" r="5.1"/>
<circle cx="349" cy="461" r="5.1"/>
<circle cx="362" cy="461" r="5.1"/>
<circle cx="299" cy="477" r="5.1"/>
<circle cx="297" cy="483" r="5.1"/>
<circle cx="315" cy="479" r="5.1"/>
</g>
<g fill="none" stroke="#000" stroke-width="1.6" stroke-linejoin="round">
<path d="M1 26 L39 15"/>
<path d="M1 26 L12 88"/>
<path d="M20 0 L27 18 L30 26"/>
<path d="M0 67 L21 65"/>
<path d="M72 71 L85 69 L127 58 L154 53 L179 46 L191 38 L200 36 L212 33 L252 20 L262 22 L279 24"/>
<path d="M127 58 L130 71 L129 87 L127 115 L126 139 L131 164 L131 169 L140 195 L151 226 L159 261 L166 297 L179 338"/>
<path d="M179 46 L187 61 L190 76 L192 87 L193 99 L194 114 L184 125 L191 146"/>
<path d="M129 87 L114 87 L101 95 L98 108 L107 141 L126 139"/>
<path d="M129 87 L142 87 L190 76"/>
<path d="M127 115 L138 114 L193 99"/>
<path d="M126 139 L184 125 L194 117"/>
<path d="M131 164 L176 153 L191 146 L206 140 L216 138 L232 134 L243 127 L272 119"/>
<path d="M176 153 L180 169"/>
<path d="M184 12 L195 11"/>
<path d="M192 87 L205 84 L208 83 L223 82"/>
<path d="M206 10 L209 10 L245 0"/>
<path d="M270 0 L262 22 L260 35 L272 119 L272 142 L274 153 L279 169 L287 195 L297 242 L298 277 L307 338"/>
<path d="M209 10 L212 33 L216 61 L223 82 L229 110"/>
<path d="M232 134 L241 150 L272 142"/>
<path d="M220 169 L274 153 L307 142"/>
<path d="M83 2 L73 14 L72 70"/>
<path d="M78 44 L87 77 L79 95 L80 169"/>
<path d="M16 137 L23 182 L25 197"/>
<path d="M42 195 L61 189 L59 182"/>
<path d="M8 285 L26 285 L44 281 L73 275"/>
<path d="M48 302 L76 295"/>
<path d="M54 335 L82 330"/>
<path d="M39 245 L44 281 L48 302 L54 335 L54 338 L65 403"/>
<path d="M68 245 L73 275 L76 295 L82 330 L83 338 L93 394"/>
<path d="M113 176 L124 169"/>
<path d="M101 207 L140 195 L184 183 L206 176 L221 172 L236 169"/>
<path d="M179 169 L184 183 L187 193 L200 213 L206 232 L209 251 L215 285 L225 338"/>
<path d="M151 226 L200 213"/>
<path d="M151 226 L125 234 L140 338 L142 338 L151 368 L152 398 L154 418 L154 438"/>
<path d="M159 261 L205 250 L209 251 L233 247"/>
<path d="M137 305 L166 297 L191 291 L206 287 L215 285 L226 286 L238 284 L259 281 L283 277 L298 277"/>
<path d="M191 291 L201 338"/>
<path d="M206 213 L227 209 L247 206 L287 195"/>
<path d="M247 206 L259 281 L266 303"/>
<path d="M0 189 L6 195 L4 221 L0 222"/>
<path d="M1 240 L10 242 L13 256"/>
<path d="M0 262 L5 273 L8 284 L8 291 L7 305 L6 319 L9 329"/>
<path d="M7 305 L21 305"/>
<path d="M20 290 L21 305 L21 312 L6 319"/>
<path d="M9 329 L24 326 L26 338"/>
<path d="M5 349 L15 346 L27 343 L36 341"/>
<path d="M15 346 L20 362 L23 371 L17 383 L20 397 L14 407"/>
<path d="M6 360 L20 362 L30 358 L27 343"/>
<path d="M0 377 L14 374 L23 371 L32 370"/>
<path d="M14 374 L8 386 L12 400"/>
<path d="M17 383 L31 380 L42 378"/>
<path d="M31 380 L32 392 L20 397"/>
<path d="M1 410 L6 415 L14 407"/>
<path d="M0 415 L25 413 L47 408 L65 403 L81 398 L93 394 L108 386 L112 383"/>
<path d="M81 398 L86 420 L52 431"/>
<path d="M25 413 L27 426 L22 436 L11 439 L0 442"/>
<path d="M11 439 L17 461"/>
<path d="M72 447 L84 484"/>
<path d="M41 495 L61 490 L84 484 L104 476 L114 462 L114 452 L108 434"/>
<path d="M0 482 L27 476 L36 482 L41 495 L45 505"/>
<path d="M0 505 L41 495"/>
<path d="M122 374 L151 368 L183 358 L204 351 L227 346 L248 342 L264 338"/>
<path d="M176 338 L183 358 L191 386 L194 396 L199 411"/>
<path d="M126 380 L138 394 L152 398 L170 392 L191 386 L206 381 L214 379 L230 374 L252 370"/>
<path d="M170 392 L176 417 L182 436 L192 443 L204 440 L206 440 L238 429 L260 422 L289 414 L319 405 L332 406 L345 401"/>
<path d="M162 440 L171 471 L206 462"/>
<path d="M197 492 L206 490 L228 484 L260 472 L276 467 L300 460 L328 452"/>
<path d="M225 338 L231 386 L238 429 L244 450 L254 478"/>
<path d="M206 365 L231 360 L250 355"/>
<path d="M206 341 L208 352 L214 379"/>
<path d="M276 364 L280 372 L283 385 L287 398 L289 414 L300 460"/>
<path d="M280 372 L290 371 L293 368"/>
<path d="M288 360 L311 353 L351 348"/>
<path d="M312 362 L351 349"/>
<path d="M308 338 L311 353 L314 375 L319 405 L322 422 L328 452 L330 461"/>
<path d="M339 367 L344 390 L345 401 L347 414"/>
<path d="M344 390 L358 384"/>
<path d="M322 422 L347 414 L361 409"/>
<path d="M206 460 L212 459 L221 457 L244 450 L261 450 L272 458 L276 467"/>
<path d="M221 457 L228 484"/>
<path d="M274 403 L287 398"/>
<path d="M112 383 L103 410 L108 434 L118 432"/>
<path d="M104 418 L112 412 L116 420 L108 428"/>
<path d="M130 418 L149 423 L154 440 L142 462 L141 474 L146 480"/>
<path d="M136 436 L146 438 L143 430"/>
<path d="M118 432 L124 475 L125 483 L126 505"/>
<path d="M137 455 L141 474 L150 492 L180 500 L206 497 L250 486 L297 472 L349 458"/>
<path d="M125 483 L150 505"/>
<path d="M146 480 L160 496 L190 503 L230 494 L286 479 L349 463 L411 443"/>
<path d="M215 494 L240 499 L299 480 L315 479 L362 461 L411 438"/>
<path d="M70 207 L74 200 L80 201 L82 209 L85 217"/>
<path d="M70 217 L85 217 L92 209 L101 207"/>
<path d="M97 212 L103 222 L100 245 L97 262"/>
<path d="M65.4 -1.2 L72.5 19.3 L75.6 49.8 L76.6 84.8 L80.6 124.6 L86.6 168.5"/>
<path d="M63.3 -0.5 L70.4 19.7 L73.4 49.9 L74.4 84.9 L78.4 124.8 L84.4 168.8"/>
<path d="M60.7 0.5 L67.6 20.3 L70.6 50.1 L71.6 85.1 L75.6 125.2 L81.6 169.2"/>
<path d="M58.6 1.2 L65.5 20.7 L68.4 50.2 L69.4 85.2 L73.4 125.4 L79.4 169.5"/>
<path d="M86.9 168.5 L92.9 214.5 L99.9 273.4 L107.8 309.2 L113.8 337.2"/>
<path d="M84.4 168.8 L90.4 214.8 L97.4 273.8 L105.4 309.7 L111.4 337.7"/>
<path d="M81.6 169.2 L87.6 215.2 L94.6 274.2 L102.6 310.3 L108.6 338.3"/>
<path d="M79.1 169.5 L85.1 215.5 L92.1 274.6 L100.2 310.8 L106.2 338.8"/>
<path d="M115.3 337.0 L121.3 369.0 L127.3 404.2 L132.3 439.2 L137.3 474.3 L141.4 504.3"/>
<path d="M112.7 337.5 L118.7 369.5 L124.7 404.6 L129.7 439.6 L134.7 474.6 L138.7 504.6"/>
<path d="M110.0 338.0 L116.0 370.0 L122.0 405.0 L127.0 440.0 L132.0 475.0 L136.0 505.0"/>
<path d="M107.3 338.5 L113.3 370.5 L119.3 405.4 L124.3 440.4 L129.3 475.4 L133.3 505.4"/>
<path d="M104.7 339.0 L110.7 371.0 L116.7 405.8 L121.7 440.8 L126.7 475.7 L130.6 505.7"/>
<path d="M121 400 L123 440 L124 475 L122 505"/>
<path d="M124 400 L131 440 L140 475 L148 505"/>
<path d="M0 464 L55 451 L107 434 L130 427 L149 423 L206 408 L283 385 L339 367 L411 341" stroke-width="3.9"/>
<path d="M149.7 502.0 L205.5 496.0 L249.2 485.1 L285.2 474.1 L348.2 458.1 L410.1 438.1"/>
<path d="M150.0 505.0 L206.0 499.0 L250.0 488.0 L286.0 477.0 L349.0 461.0 L411.0 441.0"/>
<path d="M150.3 508.0 L206.5 502.0 L250.8 490.9 L286.8 479.9 L349.8 463.9 L411.9 443.9"/>
<path d="M2.1 96.8 L8.1 168.8 L11.1 183.6 L19.1 226.7 L28.1 284.7 L38.1 340.6 L44.1 377.7 L49.1 407.6 L54.1 430.6 L57.1 450.7 L63.1 489.7 L66.1 504.6"/>
<path d="M-2.1 97.2 L3.9 169.2 L6.9 184.4 L14.9 227.3 L23.9 285.3 L33.9 341.4 L39.9 378.3 L44.9 408.4 L49.9 431.4 L52.9 451.3 L58.9 490.3 L61.9 505.4"/>
<path d="M193.0 -0.2 L201.0 35.8 L206.0 61.8 L209.0 82.9 L217.0 137.9 L222.0 171.8 L228.0 208.8 L234.0 246.9 L239.0 283.8 L249.0 340.8 L256.0 393.9 L261.0 421.9 L262.0 449.9 L264.0 480.9 L267.0 504.9"/>
</g>
</g>
<g>
<rect x="22" y="23" width="48" height="96" fill="#fff"/><rect x="22" y="70.6" width="48" height="0.9" fill="#bdbdbd"/>
<rect x="22" y="134" width="48" height="48" fill="#fff"/><rect x="22" y="197" width="48" height="48" fill="#fff"/>
<g fill="none" stroke="#767676" stroke-width="1.35" stroke-linecap="round">
<circle cx="41.9" cy="41.8" r="9.3"/><path d="M48.6 48.6 L59 58.8 M37.4 41.8 H46.4 M41.9 37.3 V46.3"/>
<circle cx="41.9" cy="89.8" r="9.3"/><path d="M48.6 96.6 L59 106.8 M37.4 89.8 H46.4"/>
<rect x="34.6" y="146.6" width="22.8" height="22" stroke-width="1.4"/>
<path d="M52.8 147 L49.7 148.7 L48.8 150.7 L49.7 151.3 L48.2 153.6 L46.8 154.7 L47.4 156.2 L45.6 157.6 L43.6 157.6 L42.7 159.1 L40.4 158.2 L39.6 159.4 L39.3 161.4 L42.2 162.2 L40.4 163.7 L42.5 165.4 L41.9 167.1 L40.4 168 M57.2 161.1 L53.1 160.8 L51.4 159.6 L48.5 160.8 L47.6 163.4 L46.2 165.4 L46.8 166.9 L49.1 167.7" stroke-width="1.15" stroke-linejoin="round"/>
</g>
<path d="M46.4 209.2 L55.2 231.8 L46.4 225.6 L37.7 231.8 Z" fill="#757575"/>
</g>
</svg>

</body>
</html>
